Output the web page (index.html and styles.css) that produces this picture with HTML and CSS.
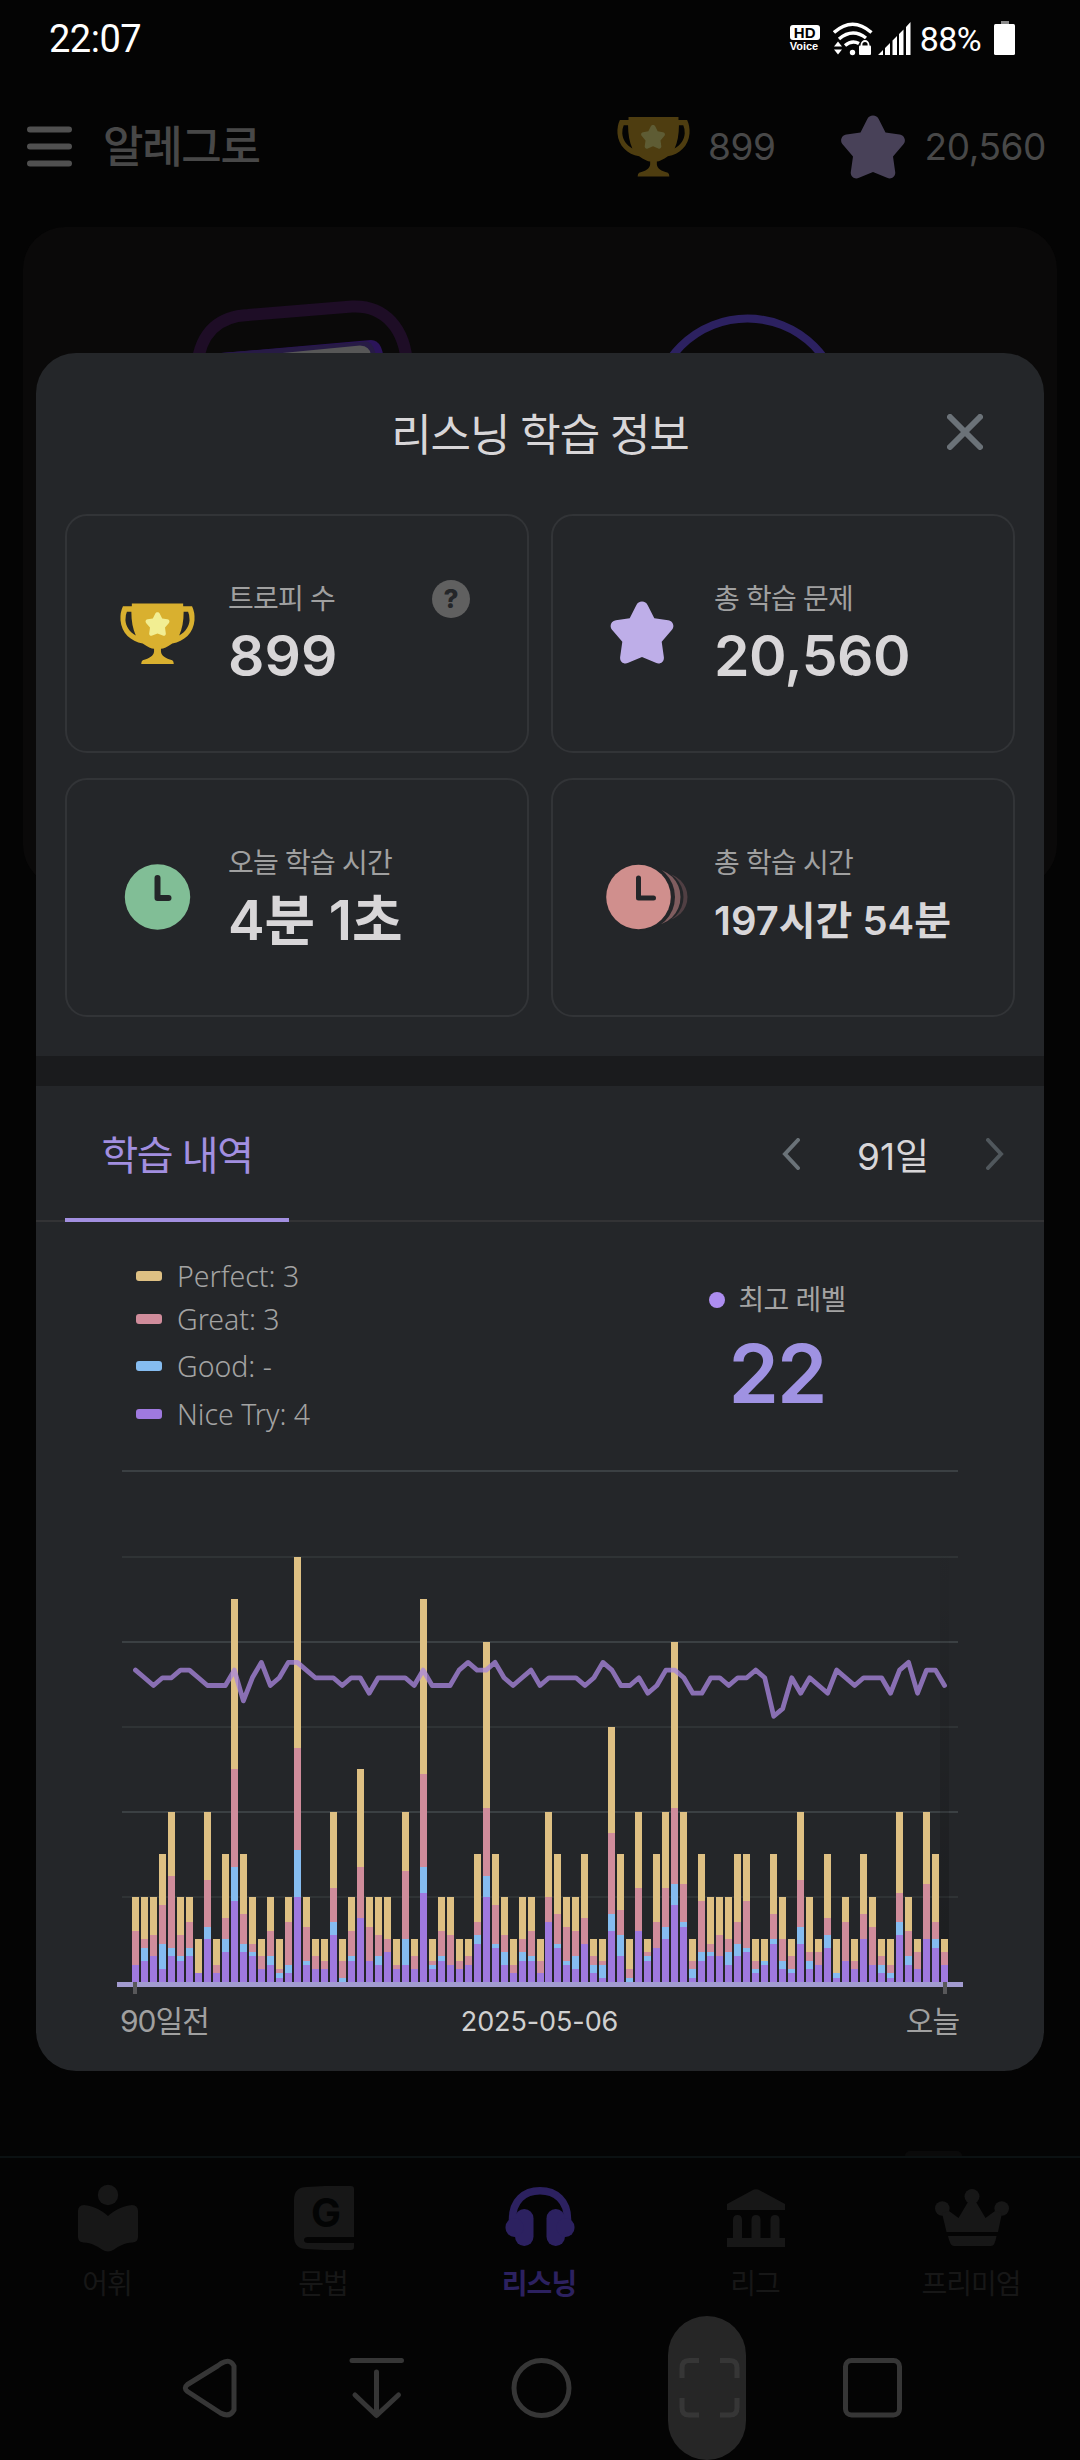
FILE: index.html
```html
<!DOCTYPE html>
<html lang="ko">
<head>
    <meta charset="UTF-8">
    <meta name="viewport" content="width=device-width, initial-scale=1.0">
    <title>리스닝 학습 정보</title>
    <link rel="stylesheet" href="styles.css">
</head>
<body>

    <svg class="defs" width="0" height="0">
        <symbol id="star" viewBox="0 0 64 64">
            <path d="M32 0.5C34.6 0.5 36.6 1.8 37.8 4.2L44.5 17.5L58.5 19.6C63.8 20.4 65.6 26.3 62 29.8L52 41.5L54.2 57C54.8 62 50.2 64.8 46 62.8L32 57L18 62.8C13.8 64.8 9.2 62 9.8 57L12 41.5L2 29.8C-1.6 26.3 0.2 20.4 5.5 19.6L19.5 17.5L26.2 4.2C27.4 1.8 29.4 0.5 32 0.5Z"/>
        </symbol>
        <symbol id="trophy" viewBox="0 0 76 62">
            <path fill-rule="evenodd" d="M12 0H64V3H73Q76 9 75.5 17C74.5 30 65 38.5 53 40.5C48 44 44 45.8 41.5 46V49C42 53 46 56 53 57.500Q54.500 58.500 54.500 61.500H21.500Q21.500 58.500 23 57.500C30 56 34 53 34.500 49V46C32 45.800 28 44 23 40.500C11 38.500 1.500 30 0.500 17Q0 9 3 3H12ZM7 8.500H11.500C11.500 18 13 26 16 32.500C9.500 28.500 6 23.500 5.500 17Q5.500 11.500 7 8.500ZM69 8.500H64.500C64.500 18 63 26 60 32.500C66.500 28.500 70 23.500 70.500 17Q70.500 11.500 69 8.500Z"/>
        </symbol>
    </svg>

    <div class="page">
        <div class="status-bar">
            <span class="status-time">22:07</span>
            <div class="status-icons">
                <div class="hd-voice"><b>HD</b><span>Voice</span></div>
                <svg class="wifi" width="40" height="34" viewBox="0 0 40 34">
                    <g fill="none" stroke="#fff" stroke-width="3.4">
                        <path d="M1 10.500Q19.500 -6 38.500 10.500"/>
                        <path d="M6 17Q19.500 5.500 33 16"/>
                        <path d="M12 23.500Q19 17.500 26 21.500"/>
                    </g>
                    <circle cx="19.500" cy="30.500" r="2.700" fill="#fff"/>
                    <path fill="#fff" d="M1 24.500L5 19.500L9 24.500ZM1 27.500L5 32.500L9 27.500Z"/>
                    <rect x="26" y="23.500" width="12" height="9.500" rx="1" fill="#fff"/>
                    <path d="M28.500 24V22.500a3.500 3.500 0 0 1 7 0V24" fill="none" stroke="#fff" stroke-width="1.800"/>
                </svg>
                <svg class="signal" width="33" height="33" viewBox="0 0 33 33" fill="#fff">
                    <path d="M0 33L5 28V33ZM7 26L12 21V33H7ZM14.500 18.500L19 14V33H14.500ZM21 12L25.500 7.500V33H21ZM28 5L32.500 0V33H28Z"/>
                </svg>
                <span class="battery-text">88%</span>
                <svg class="battery" width="22" height="34" viewBox="0 0 22 34">
                    <rect x="7" y="0" width="8" height="3" fill="#888"/>
                    <rect x="0" y="3" width="21" height="31" rx="1.500" fill="#fff"/>
                </svg>
            </div>
        </div>

        <header class="header">
            <svg width="45" height="42" viewBox="0 0 45 42" class="hamburger">
                <path d="M3 3.500H42M3 20.500H42M3 37.500H42"/>
            </svg>
            <span class="header-title">알레그로</span>
            <svg class="header-trophy" viewBox="0 0 76 62" preserveAspectRatio="none">
                <use href="#trophy"/>
                <use href="#star" x="25" y="8" width="25" height="25" class="header-trophy-star"/>
            </svg>
            <span class="header-count header-count-trophy">899</span>
            <svg class="header-star"><use href="#star"/></svg>
            <span class="header-count">20,560</span>
        </header>

        <div class="hero-card">
            <svg width="1034" height="140" viewBox="23 227 1034 140" fill="none">
                <path d="M197 367C200 330 222 316 248 315L352 306.500C384 305 406 328 407 367" stroke="#1e0d26" stroke-width="12"/>
                <path d="M215 353.500L371 340Q384 340 384 367H215Z" fill="#2b1459"/>
                <path d="M215 353.500L366 341.500Q376 342 377 367H215Z" fill="#271b45"/>
                <path d="M272 354L360 345.500Q370 346 371 355V367H272Z" fill="#575757"/>
                <circle cx="747.500" cy="412.500" r="94" stroke="#2c2160" stroke-width="8"/>
            </svg>
        </div>

        <div class="scroll-pill"></div>

        <nav class="tab-bar">
            <div class="tab-item">
                <svg width="74" height="68" viewBox="0 0 74 68">
                    <circle cx="37" cy="11" r="10.200"/>
                    <path d="M13 21C22 22 30 25.500 37 32C44 25.500 52 22 61 21Q67 21.500 67 27V53Q67 58 61.500 58.500C53 59 48 62 43 65.500Q37 69.500 31 65.500C26 62 21 59 12.500 58.500Q7 58 7 53V27Q7 21.500 13 21Z"/>
                </svg>
                <span>어휘</span>
            </div>
            <div class="tab-item">
                <svg width="74" height="68" viewBox="0 0 74 68">
                    <path d="M7 16Q7 3 20 3L38 2H64Q67 2 67 5V53H21Q17 53 17 56Q17 59 21 59H67V63Q67 66 64 66H38L20 65Q7 65 7 52Z"/>
                    <text x="38.500" y="43" class="book-letter">G</text>
                </svg>
                <span>문법</span>
            </div>
            <div class="tab-item tab-item-active">
                <svg width="74" height="68" viewBox="0 0 74 68">
                    <path fill="none" stroke="#2c2160" stroke-width="7.500" d="M9.500 41V35C9.500 17 21 6.700 37 6.700C53 6.700 64.500 17 64.500 35V41"/>
                    <rect x="12" y="25" width="18.500" height="37" rx="9.200"/>
                    <rect x="43.500" y="25" width="18.500" height="37" rx="9.200"/>
                    <rect x="2.500" y="34" width="18" height="19" rx="9"/>
                    <rect x="53.500" y="34" width="18" height="19" rx="9"/>
                </svg>
                <span>리스닝</span>
            </div>
            <div class="tab-item">
                <svg width="74" height="68" viewBox="0 0 74 68">
                    <path d="M8 26V20L33 6.500Q37 4 41 6.500L66 20V26ZM8 54H14V36Q14 31 18.500 31Q23 31 23 36V54H32.500V36Q32.500 31 37 31Q41.500 31 41.500 36V54H51.500V36Q51.500 31 56 31Q60.500 31 60.500 36V54H66V63H8Z"/>
                </svg>
                <span>리그</span>
            </div>
            <div class="tab-item">
                <svg width="74" height="68" viewBox="0 0 74 68">
                    <circle cx="37" cy="12.500" r="7.500"/>
                    <circle cx="7.300" cy="24.500" r="7.300"/>
                    <circle cx="66.700" cy="24.500" r="7.300"/>
                    <path d="M7 29L14 27L23.500 34L33 18H41L50.500 34L60 27L67 29L63 48H11.500ZM13 52H61.500Q60 62 56 62H19Q15 62 13 52Z"/>
                </svg>
                <span>프리미엄</span>
            </div>
        </nav>

        <div class="sys-nav">
            <svg viewBox="0 0 78 144"><path d="M46.500 50L16.500 68.500Q12 72 16.500 75.500L49.500 97Q58.500 102 63 94V50Q59 42 50 47.500Z"/></svg>
            <svg viewBox="0 0 78 144"><path d="M15 44.500H64.500M39.500 56V99M18 79L39.500 99.500L61.500 79"/></svg>
            <svg viewBox="0 0 78 144"><circle cx="39.500" cy="72" r="27.500"/></svg>
            <svg viewBox="0 0 78 144" class="sys-pill"><path d="M14 62V52Q14 44.500 21 44.500H31M52 44.500H62Q69 44.500 69 52V62M69 82V92Q69 99 62 99H52M31 99H21Q14 99 14 92V82"/></svg>
            <svg viewBox="0 0 78 144"><rect x="12.500" y="44.500" width="54" height="54.500" rx="6"/></svg>
        </div>
    </div>

    <div class="modal">
        <div class="modal-header">
            <h1>리스닝 학습 정보</h1>
            <svg class="close" width="36" height="36" viewBox="0 0 36 36"><path d="M3 3L33 33M33 3L3 33"/></svg>
        </div>

        <div class="stats">
            <div class="stat">
                <svg class="stat-icon" width="100" height="76" viewBox="0 0 100 76">
                    <use href="#trophy" x="13" y="7" width="75" height="62" fill="#d9b02f"/>
                    <use href="#star" x="38" y="16" width="25" height="24" fill="#f2ee92"/>
                </svg>
                <div class="stat-text">
                    <p class="stat-label">트로피 수</p>
                    <p class="stat-value">899</p>
                </div>
                <div class="help">?</div>
            </div>
            <div class="stat">
                <svg class="stat-icon" width="100" height="76" viewBox="0 0 100 76">
                    <use href="#star" x="17" y="5" width="64" height="63" fill="#beaee8"/>
                </svg>
                <div class="stat-text">
                    <p class="stat-label">총 학습 문제</p>
                    <p class="stat-value stat-value-total">20,560</p>
                </div>
            </div>
            <div class="stat">
                <svg class="stat-icon" width="100" height="76" viewBox="0 0 100 76">
                    <circle cx="50.500" cy="37" r="32.700" fill="#81be96"/>
                    <path d="M50.500 18V38H61.500" class="clock-hand"/>
                </svg>
                <div class="stat-text">
                    <p class="stat-label">오늘 학습 시간</p>
                    <p class="stat-value stat-value-ko">4분 1초</p>
                </div>
            </div>
            <div class="stat">
                <svg class="stat-icon" width="100" height="76" viewBox="0 0 100 76">
                    <circle cx="71" cy="37" r="23.500" fill="#503f43"/>
                    <circle cx="63.500" cy="37" r="27" fill="#242629"/>
                    <circle cx="59" cy="37" r="28.500" fill="#805d5f"/>
                    <circle cx="48" cy="37" r="34" fill="#242629"/>
                    <circle cx="45.500" cy="37" r="32.300" fill="#d08f8d"/>
                    <path d="M45.500 18V38H60.500" class="clock-hand clock-hand-thin"/>
                </svg>
                <div class="stat-text">
                    <p class="stat-label">총 학습 시간</p>
                    <p class="stat-value stat-value-small">197시간 54분</p>
                </div>
            </div>
        </div>

        <div class="band"></div>

        <div class="history-bar">
            <div class="history-tab">학습 내역</div>
            <div class="range">
                <svg width="18" height="32" viewBox="0 0 18 32"><path d="M16 2L3 16L16 30"/></svg>
                <span>91일</span>
                <svg width="18" height="32" viewBox="0 0 18 32" class="range-next"><path d="M2 2L15 16L2 30"/></svg>
            </div>
        </div>

        <div class="summary">
            <ul class="legend">
                <li><i class="perfect"></i>Perfect: 3</li>
                <li><i class="great"></i>Great: 3</li>
                <li><i class="good"></i>Good: -</li>
                <li><i class="nicetry"></i>Nice Try: 4</li>
            </ul>
            <div class="level">
                <p class="level-label"><i></i>최고 레벨</p>
                <p class="level-value">22</p>
            </div>
        </div>

        <svg class="chart" id="chart" width="1008" height="546" viewBox="0 0 1008 546">
            <defs>
                <linearGradient id="todayShade" x1="0" y1="0" x2="0" y2="1">
                    <stop offset="0" stop-color="#000" stop-opacity="0"/>
                    <stop offset="1" stop-color="#000" stop-opacity="0.22"/>
                </linearGradient>
            </defs>
        </svg>
        <div class="chart-labels">
            <span class="label-start">90일전</span>
            <span class="label-mid">2025-05-06</span>
            <span class="label-end">오늘</span>
        </div>
    </div>

    <script src="script.js"></script>
</body>
</html>
```

FILE: styles.css
```css
* {
    box-sizing: border-box;
}
body {
    font-family: Inter, 'Noto Sans CJK KR', sans-serif;
    background-color: #040404;
    margin: 0;
    position: relative;
    width: 1080px;
    height: 2460px;
    overflow: hidden;
}
h1, p, ul {
    margin: 0;
    padding: 0;
}
.defs {
    position: absolute;
}
.page {
    display: flex;
    flex-direction: column;
    height: 2460px;
}

/* status bar */
.status-bar {
    display: flex;
    justify-content: space-between;
    align-items: center;
    height: 77px;
    padding: 0 64px 0 49px;
    font-family: Roboto, sans-serif;
    color: #fff;
}
.status-time {
    font-size: 38px;
    letter-spacing: -0.5px;
}
.status-icons {
    display: flex;
    align-items: center;
}
.hd-voice {
    width: 30px;
    margin-right: 13px;
    font-family: 'Liberation Sans', sans-serif;
}
.hd-voice b {
    display: block;
    height: 15px;
    line-height: 15px;
    border-radius: 3px;
    background-color: #fff;
    color: #000;
    font-size: 15px;
    text-align: center;
}
.hd-voice span {
    display: block;
    height: 12px;
    line-height: 13px;
    font-size: 11px;
    font-weight: bold;
}
.wifi {
    margin-right: 5px;
}
.signal {
    margin-right: 9px;
}
.battery-text {
    font-size: 34px;
    letter-spacing: -0.6px;
    margin-right: 13px;
}
.battery {
    margin-top: -1px;
}

/* dimmed page behind the modal */
.header {
    display: flex;
    align-items: center;
    height: 150px;
    padding: 0 34px 11px 27px;
}
.hamburger {
    margin-right: 31px;
    fill: none;
    stroke: #505050;
    stroke-width: 6;
    stroke-linecap: round;
}
.header-title {
    flex: 1;
    font-size: 44px;
    font-weight: 500;
    line-height: 60px;
    letter-spacing: -1.3px;
    color: #484848;
}
.header-trophy {
    width: 73px;
    height: 60px;
    margin-right: 18px;
    fill: #4e3d10;
}
.header-trophy-star {
    fill: #5e5c34;
}
.header-star {
    width: 64px;
    height: 64px;
    margin-right: 20px;
    fill: #484158;
}
.header-count {
    font-size: 37px;
    letter-spacing: -0.4px;
    color: #484848;
}
.header-count-trophy {
    margin-right: 65px;
}
.hero-card {
    height: 660px;
    margin: 0 23px;
    border-radius: 42px;
    background-color: #0a0909;
}
.scroll-pill {
    width: 57px;
    height: 5px;
    margin: auto 118px 0 905px;
    border-radius: 8px 8px 0 0;
    background-color: #0a0a0a;
}
.tab-bar {
    display: flex;
    height: 160px;
    padding-top: 26px;
    border-top: 2px solid #0b1112;
}
.tab-item {
    flex: 1;
    display: flex;
    flex-direction: column;
    align-items: center;
    gap: 12px;
    fill: #171717;
    color: #171717;
    font-size: 28px;
    line-height: 40px;
    letter-spacing: -1px;
}
.tab-item span {
    margin-right: 2px;
}
.tab-item-active {
    fill: #2c2160;
    color: #2c2160;
    font-weight: bold;
}
.book-letter {
    font-weight: bold;
    font-size: 40px;
    text-anchor: middle;
    fill: #030404;
}
.sys-nav {
    display: flex;
    gap: 87.5px;
    padding-left: 171px;
    height: 144px;
}
.sys-nav svg {
    flex: none;
    width: 78px;
    height: 144px;
    fill: none;
    stroke: #363636;
    stroke-width: 5;
    stroke-linecap: round;
    stroke-linejoin: round;
}
.sys-nav .sys-pill {
    background-color: #262626;
    border-radius: 39px;
    stroke-linecap: butt;
}

/* modal */
.modal {
    position: absolute;
    left: 36px;
    top: 353px;
    width: 1008px;
    height: 1718px;
    border-radius: 40px;
    background-color: #242629;
    overflow: hidden;
}
.modal-header {
    display: flex;
    align-items: center;
    height: 161px;
    padding: 0 61px 3px 97px;
}
.modal-header h1 {
    flex: 1;
    text-align: center;
    font-size: 44px;
    font-weight: normal;
    letter-spacing: -1.2px;
    color: #d8d6d8;
}
.close {
    fill: none;
    stroke: #6b7278;
    stroke-width: 6;
    stroke-linecap: round;
}
.stats {
    display: grid;
    grid-template-columns: 464px 464px;
    grid-auto-rows: 239px;
    gap: 25px 22px;
    padding-left: 29px;
}
.stat {
    display: flex;
    border: 2px solid #323437;
    border-radius: 22px;
    padding: 63px 0 0 40px;
}
.stat-icon {
    margin-top: 17px;
}
.stat-text {
    flex: 1;
    padding-left: 21px;
}
.stat-label {
    font-size: 28px;
    line-height: 41px;
    letter-spacing: -0.8px;
    color: #a0a0a0;
}
.stat-value {
    font-size: 57px;
    line-height: 72px;
    font-weight: 600;
    color: #d8d6d8;
    white-space: nowrap;
}
.stat-value-total {
    letter-spacing: -0.5px;
}
.stat-value-ko {
    font-size: 55px;
    letter-spacing: -0.1px;
}
.stat-value-small {
    font-size: 40px;
    line-height: 74px;
    letter-spacing: 0;
}
.help {
    width: 38px;
    height: 38px;
    margin-right: 57px;
    margin-top: 1px;
    border-radius: 50%;
    background-color: #606060;
    color: #242629;
    font-size: 26px;
    font-weight: 800;
    line-height: 38px;
    text-align: center;
}
.clock-hand {
    fill: none;
    stroke: #242629;
    stroke-width: 6;
    stroke-linecap: round;
    stroke-linejoin: round;
}
.clock-hand-thin {
    stroke-width: 5;
}
.band {
    height: 30px;
    margin-top: 39px;
    background-color: #1a1b1d;
}
.history-bar {
    display: flex;
    justify-content: space-between;
    height: 136px;
    padding: 0 40px 0 29px;
    box-shadow: inset 0 -2px #333335;
}
.history-tab {
    width: 224px;
    line-height: 139px;
    text-align: center;
    font-size: 40px;
    letter-spacing: -1.5px;
    color: #a28fe0;
    border-bottom: 4px solid #a28fe0;
}
.range {
    display: flex;
    align-items: center;
    gap: 57px;
    padding-bottom: 1px;
    font-size: 37px;
    letter-spacing: 0;
    color: #d8d6d8;
}
.range svg {
    fill: none;
    stroke: #6a7278;
    stroke-width: 4;
    stroke-linecap: round;
}
.range .range-next {
    stroke: #50575c;
}
.summary {
    display: flex;
    height: 228px;
    padding: 31px 0 0 100px;
}
.legend {
    width: 526px;
    list-style: none;
    font-family: 'Noto Sans', sans-serif;
    font-size: 28.5px;
    font-weight: 350;
    color: #a3a3a3;
}
.legend li {
    display: flex;
    align-items: center;
    height: 47px;
}
.legend li:first-child {
    height: 45px;
}
.legend li:nth-child(2) {
    height: 42px;
}
.legend li:nth-child(3) {
    height: 52px;
}
.legend li:nth-child(4) {
    height: 44px;
}
.legend i {
    width: 26px;
    height: 10px;
    margin-right: 15px;
    border-radius: 3px;
}
.perfect {
    background-color: #dec083;
}
.great {
    background-color: #d08c9b;
}
.good {
    background-color: #85bcf0;
}
.nicetry {
    background-color: #9f79df;
}
.level {
    width: 230px;
    padding-top: 27px;
}
.level-label {
    display: flex;
    align-items: center;
    justify-content: center;
    font-size: 28px;
    line-height: 40px;
    letter-spacing: -0.8px;
    color: #a3a3a3;
}
.level-label i {
    width: 16px;
    height: 16px;
    margin-right: 14px;
    border-radius: 50%;
    background-color: #ad8df0;
}
.level-value {
    text-align: center;
    font-size: 81px;
    line-height: 108px;
    font-weight: 600;
    letter-spacing: -2px;
    color: #9f92e2;
}
.chart {
    display: block;
}
.chart-labels {
    display: flex;
    justify-content: space-between;
    align-items: center;
    height: 50px;
    padding: 0 85px 0 84px;
    line-height: 50px;
    color: #a0a0a0;
}
.label-start, .label-end {
    width: 140px;
    font-size: 30px;
    letter-spacing: -1px;
}
.label-mid {
    padding-top: 2px;
    font-size: 27px;
    letter-spacing: -0.1px;
    color: #d0d0d0;
}
.label-end {
    text-align: right;
}

/* chart parts */
.grid-line {
    stroke: #2f3335;
    stroke-width: 2;
}
.grid-line-major {
    stroke: #3b4043;
}
.bar-nicetry {
    fill: #9f79df;
}
.bar-good {
    fill: #85bcf0;
}
.bar-great {
    fill: #d08c9b;
}
.bar-perfect {
    fill: #dec083;
}
.level-line {
    fill: none;
    stroke: #a886dd;
    stroke-opacity: 0.77;
    stroke-width: 4.8;
    stroke-linecap: round;
    stroke-linejoin: round;
}
.axis {
    fill: #a29bd0;
}
.tick {
    fill: #58585a;
}
```

FILE: script.js
```js
// one entry per day, oldest first: [nice try, good, great, perfect]
const days = [
    [4,0,8,8], [5,3,2,10], [6,0,5,9], [3,6,9,12], [6,2,17,15], [5,1,5,9], [6,2,6,6], [2,0,0,8], [10,3,11,16], [2,0,2,6],
    [7,3,5,15], [19,8,23,40], [7,2,7,14], [6,1,2,11], [3,0,3,4], [4,2,6,8], [1,1,1,7], [2,2,10,6], [20,11,24,45], [4,1,8,7],
    [3,0,3,4], [3,0,2,5], [11,3,8,18], [0,1,4,5], [5,1,6,8], [15,0,12,23], [5,0,8,7], [4,2,5,9], [7,0,3,10], [3,0,1,6],
    [4,6,16,14], [3,0,3,4], [21,6,22,41], [3,1,1,5], [5,1,6,8], [4,0,7,9], [3,0,2,5], [4,0,2,4], [9,2,3,16], [20,5,16,39],
    [8,1,9,12], [4,3,4,9], [2,0,2,6], [5,2,3,10], [5,1,6,8], [2,0,3,5], [14,0,6,20], [8,1,7,14], [4,1,8,7], [3,3,6,8],
    [9,0,6,15], [2,2,2,4], [1,3,1,5], [12,4,19,25], [6,5,6,13], [0,1,2,7], [12,0,10,18], [5,1,1,3], [8,0,6,16], [10,3,9,18],
    [18,5,18,39], [13,1,9,17], [1,2,2,5], [5,2,12,11], [6,1,2,11], [6,0,5,9], [4,3,3,10], [6,3,5,16], [7,1,11,11], [2,1,2,5],
    [4,1,0,5], [9,1,6,14], [3,2,5,10], [2,1,3,4], [9,4,11,16], [3,2,2,13], [4,0,3,3], [8,3,4,15], [1,1,0,8], [5,0,9,6],
    [3,0,2,5], [10,0,6,14], [4,0,9,7], [2,2,2,4], [1,1,2,6], [11,3,7,19], [4,2,6,8], [3,0,4,3], [10,0,13,17], [8,2,4,16],
    [4,0,3,3]
];

const levels = [
    24,23,22,23,23,24,24,23,22,22,22,24,20,23,25,22,23,25,25,24,23,23,23,22,23,23,21,23,23,23,
    23,22,24,22,22,22,24,25,24,24,25,23,22,23,24,22,23,23,23,23,22,23,25,24,22,22,23,21,22,24,
    24,23,21,21,23,23,22,23,23,24,23,18,19,23,21,23,22,21,24,23,22,23,23,23,21,24,25,21,24,24,22
];

const names = ["nicetry", "good", "great", "perfect"];
const chart = document.getElementById("chart");
const base = 532;
const unit = 4.255;
const left = 96;
const step = 8.989;

function add(tag, attrs) {
    const el = document.createElementNS("http://www.w3.org/2000/svg", tag);
    for (const key in attrs) {
        el.setAttribute(key, attrs[key]);
    }
    chart.appendChild(el);
}

// grid lines every 20 questions
for (let n = 20; n <= 120; n += 20) {
    const y = Math.round(base - n * unit);
    add("line", { x1: 86, x2: 922, y1: y, y2: y, class: n % 40 === 0 ? "grid-line grid-line-major" : "grid-line" });
}

add("rect", { x: 904, y: 80, width: 9, height: base - 80, fill: "url(#todayShade)" });

days.forEach((day, i) => {
    let sum = 0;
    day.forEach((count, k) => {
        if (count === 0) return;
        const bottom = Math.round(base - sum * unit);
        sum += count;
        const top = Math.round(base - sum * unit);
        add("rect", { x: Math.round(left + i * step), y: top, width: 7, height: bottom - top, class: "bar-" + names[k] });
    });
});

const points = levels.map((level, i) => (left + 3.5 + i * step) + "," + (235.5 - (level - 22) * 7.7));
add("polyline", { points: points.join(" "), class: "level-line" });

add("rect", { x: 81, y: base, width: 846, height: 5, class: "axis" });
add("rect", { x: 97, y: base, width: 4, height: 12, class: "tick" });
add("rect", { x: 907, y: base, width: 4, height: 12, class: "tick" });
```
